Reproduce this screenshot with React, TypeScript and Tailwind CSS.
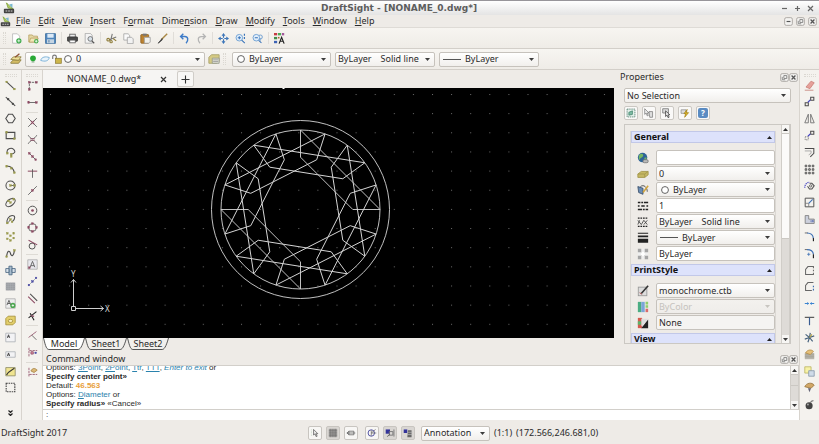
import type { ReactNode } from "react";

const RED = "#8c4a62";
const INK = "#4c4c4c";
const OLIVE = "#9a9a4e";
const BLUE = "#3b6fb5";

function Icon({ children, className = "h-[14px] w-[14px]" }: { children: ReactNode; className?: string }) {
    return (
        <svg viewBox="0 0 14 14" fill="none" strokeWidth="1" className={`shrink-0 ${className}`} aria-hidden="true">
            {children}
        </svg>
    );
}

function Dots({ at, color = OLIVE }: { at: number[][]; color?: string }) {
    return (
        <>
            {at.map(([x, y]) => (
                <rect key={`${x}-${y}`} x={x - 1} y={y - 1} width="2" height="2" fill={color} stroke={color} strokeWidth="0.6" />
            ))}
        </>
    );
}

type Tool = { name: string; art: ReactNode } | null;

const fileTools: Tool[] = [
    {
        name: "New",
        art: (
            <>
                <path d="M2 1h6l3 3v9H2z" fill="#fff" stroke="#b5b5b5" />
                <circle cx="10" cy="10" r="3.300" fill="#36a845" />
                <path d="M10 8v4M8 10h4" stroke="#fff" />
            </>
        ),
    },
    {
        name: "Open",
        art: (
            <>
                <path d="M1 11.500V2.500h4.500l1 1.500h5.500v7.500z" fill="#e6d8a4" stroke="#b6a061" />
                <path d="M1.500 11.500l2-5h9.500l-2 5z" fill="#f2e7b8" stroke="#b6a061" />
                <circle cx="10.500" cy="10.500" r="2.800" fill="#4cae50" />
                <path d="M9 10.500h3M10.500 9v3" stroke="#fff" />
            </>
        ),
    },
    {
        name: "Save",
        art: (
            <>
                <rect x="0.500" y="0.500" width="13" height="13" rx="1" fill="#4f86bd" stroke="#3a6896" />
                <rect x="3" y="1" width="8" height="5" fill="#dbe9f6" />
                <rect x="2.500" y="8" width="9" height="5" fill="#c4d4e2" />
                <path d="M5 9v3" stroke="#3a6896" />
            </>
        ),
    },
    null,
    {
        name: "Print",
        art: (
            <>
                <rect x="3.500" y="1.500" width="7" height="4" fill="#eee" stroke="#555" />
                <rect x="0.500" y="5" width="13" height="5.500" rx="1" fill="#4a4a4a" stroke="#333" />
                <rect x="3.500" y="9" width="7" height="3.500" fill="#fff" stroke="#555" />
            </>
        ),
    },
    {
        name: "Print Preview",
        art: (
            <>
                <path d="M1.500 0.500h6.500l2.500 2.500v10H1.500z" fill="#f4f4f4" stroke="#a5a5a5" />
                <circle cx="8" cy="7.500" r="3" fill="#d7e0e8" stroke="#666" />
                <path d="M10 10l3 3" stroke="#555" strokeWidth="1.500" />
            </>
        ),
    },
    null,
    {
        name: "Cut",
        art: (
            <>
                <path d="M8 1L6 9M13 5L4 8.500" stroke="#777" strokeWidth="1.400" />
                <circle cx="2.800" cy="8.500" r="1.700" stroke="#8f7d3a" strokeWidth="1.400" />
                <circle cx="6.500" cy="11" r="1.500" stroke="#8f7d3a" strokeWidth="1.400" />
                <path d="M9 7l4 3" stroke="#8f7d3a" strokeWidth="1.400" />
            </>
        ),
    },
    {
        name: "Copy",
        art: (
            <>
                <path d="M1 1h5.500l2 2v6H1z" fill="#fafafa" stroke="#a2a2a2" />
                <path d="M5.500 5.500h5.500l2 2v6H5.500z" fill="#f2f2f2" stroke="#a2a2a2" />
            </>
        ),
    },
    {
        name: "Paste",
        art: (
            <>
                <rect x="1" y="2" width="10" height="11" rx="1" fill="#bd832f" stroke="#8c6023" />
                <rect x="3.500" y="0.800" width="5" height="2.600" fill="#777" />
                <path d="M5.500 5.500h7.500v6l-1.500 1.500h-6z" fill="#f2f2ee" stroke="#999" />
            </>
        ),
    },
    {
        name: "Property Painter",
        art: (
            <>
                <path d="M13 1L6 8" stroke="#a98845" strokeWidth="1.800" />
                <path d="M6.500 7L1.500 13l5-4z" fill="#3d3d3d" stroke="#3d3d3d" />
            </>
        ),
    },
    null,
    {
        name: "Undo",
        art: <path d="M5.500 1L2 4.500 5.500 8M2.500 4.500h5c4 0 5 4.500 1.500 8.500" stroke="#3d7bc8" strokeWidth="1.800" />,
    },
    {
        name: "Redo",
        art: <path d="M8.500 1L12 4.500 8.500 8M11.500 4.500h-5C2.500 4.500 1.500 9 5 13" stroke="#b4b4b4" strokeWidth="1.600" />,
    },
    null,
    {
        name: "Pan",
        art: (
            <>
                <path d="M7 3v3M7 8v3M3 7h3M8 7h3" stroke="#3873b8" strokeWidth="1.500" />
                <path d="M7 0l2.500 3.500h-5zM7 14l2.500-3.500h-5zM0 7l3.500-2.500v5zM14 7l-3.500-2.500v5z" fill="#3873b8" />
            </>
        ),
    },
    {
        name: "Zoom In",
        art: (
            <>
                <circle cx="5.500" cy="6" r="4.200" fill="#e2effb" stroke="#5a93cd" />
                <path d="M5.500 4v4M3.500 6h4M8.500 9l4 4" stroke="#3873b8" strokeWidth="1.300" />
                <path d="M12 1v2.500M12 5v2.500" stroke="#3873b8" strokeWidth="1.500" />
            </>
        ),
    },
    {
        name: "Zoom Previous",
        art: (
            <>
                <circle cx="5.500" cy="6" r="4.200" fill="#e2effb" stroke="#5a93cd" />
                <path d="M3.500 6h4M8.500 9.500l3.500 3" stroke="#3873b8" strokeWidth="1.300" />
                <path d="M9 3c3-1 4 0 4 2s-1 3-3 3M11 6.500L9.500 8 11 9.500" stroke="#4d8acb" />
            </>
        ),
    },
    null,
    {
        name: "Properties",
        art: (
            <>
                <path d="M0 0h4v3H0z" fill="#c73b44" />
                <path d="M5 0h4v3H5z" fill="#4bab54" />
                <path d="M10 0h3v3h-3z" fill="#a35a9c" />
                <path d="M0 5h4v3H0z" fill="#3f8d49" />
                <path d="M0 10h4v3H0z" fill="#3c62b4" />
                <path d="M5 5h2v2H5z" fill="#a86432" />
                <path d="M6.500 13.500l3.200-8 3.200 8M7.500 10.500h4.500" stroke="#222" strokeWidth="1.500" />
            </>
        ),
    },
];

const drawTools: Tool[] = [
    { name: "Line", art: <><path d="M2 2.500l10 9" stroke={INK} strokeWidth="1.300" /><Dots at={[[2, 2.5], [12, 11.5]]} /></> },
    { name: "Infinite Line", art: <><path d="M1 1.500l12 11" stroke={INK} strokeWidth="1.300" /><Dots at={[[4, 4], [10, 10]]} color="#444" /></> },
    { name: "Polygon", art: <path d="M4.500 1.500h5L13 7l-3.500 5.500h-5L1 7z" stroke={INK} strokeWidth="1.400" /> },
    { name: "Rectangle", art: <><path d="M1.500 3h11v8h-11z" stroke={INK} strokeWidth="1.400" /><Dots at={[[2, 3], [12, 11]]} /></> },
    { name: "PolyLine", art: <><path d="M3 8C1 2 8 0 11 3s1 6-3 6v3" stroke={INK} strokeWidth="1.300" /><Dots at={[[3, 8], [8, 9], [8, 12]]} /></> },
    { name: "Arc", art: <><path d="M2 2.500c5 0 9 3 10 9" stroke={INK} strokeWidth="1.300" /><Dots at={[[2, 3], [8, 5.5], [12, 11]]} /></> },
    { name: "Circle", art: <><circle cx="7" cy="7" r="5.800" stroke={INK} strokeWidth="1.300" /><path d="M7 7h5" stroke={INK} /><Dots at={[[7, 7], [12, 7]]} /></> },
    { name: "Ellipse", art: <><ellipse cx="7" cy="7" rx="6.800" ry="4" transform="rotate(-38 7 7)" stroke={INK} strokeWidth="1.300" /><Dots at={[[7, 7], [11, 3], [4.5, 5]]} /></> },
    { name: "Ellipse Arc", art: <><path d="M3 12C1 8 5 2 9 2s5 4 0 8" stroke={INK} strokeWidth="1.300" /><path d="M7 7l-3 4" stroke={INK} /><Dots at={[[3, 11.5], [7, 7], [9, 10]]} /></> },
    { name: "Point", art: <Dots at={[[3, 3], [11, 3], [7, 6], [3, 10], [11, 9], [7, 12]]} /> },
    { name: "Spline", art: <><path d="M2 11C3 2 6 3 7 7s4 4 5-4" stroke={INK} strokeWidth="1.400" /><Dots at={[[2, 11], [12, 3]]} /></> },
    { name: "Insert Block", art: <><path d="M5 1.500h4v11H5z" fill="#a9bdce" stroke="#44617d" /><path d="M1 4.500h4v5H1zM9 4.500h4v5H9z" fill="#d8e2ea" stroke="#44617d" /></> },
    { name: "Hatch", art: <><path d="M1 2h12v10H1z" fill="#9c9fa3" /><path d="M1 4.500h12M1 7h12M1 9.500h12M4 2v10M7 2v10M10 2v10" stroke="#b0b3b7" strokeWidth="0.500" /></> },
    { name: "Note", art: <><path d="M1 1h12v12H1z" fill="#eee" stroke="#aaa" /><path d="M2.500 9L5 3l2.500 6M3.500 7h3" stroke="#444" /><circle cx="10" cy="9.500" r="3.300" fill="#4ba64e" /><path d="M8.500 9.500h3M10 8v3" stroke="#fff" /></> },
    { name: "Region", art: <><path d="M1 4.500l3-3h9V9.500l-3 3H1z" fill="#e3cf6b" stroke="#a28b2f" /><ellipse cx="7" cy="7.500" rx="3" ry="2" fill="#f7efc4" stroke="#a28b2f" /></> },
    { name: "Multiline Note", art: <><path d="M1 1.500h12v11H1z" fill="#f3f3f5" stroke="#a9adb3" /><path d="M3 7.500l1.500-4 1.500 4M3.500 6h2" stroke="#333" /></> },
    { name: "Simple Note", art: <><path d="M1 3.500h12v7H1z" fill="#f3f3f5" stroke="#a9adb3" /><path d="M3 9l1.500-4L6 9M3.500 7.500h2" stroke="#333" /></> },
    { name: "Wipeout", art: <><path d="M1 2h12v10.500H1z" fill="#f0e490" stroke="#8a8862" /><path d="M2 11.500C4 7 7 6 12 3" stroke="#333" strokeWidth="1.500" /></> },
    { name: "Boundary", art: <rect x="1.500" y="1.500" width="11" height="11" stroke="#444" strokeWidth="1.400" strokeDasharray="2 1" /> },
];

const snapTools: Tool[] = [
    { name: "Reference Point", art: <><path d="M3 12V3h9" stroke={INK} strokeDasharray="3 1" /><Dots at={[[3, 3], [12, 3], [3, 12]]} color={RED} /></> },
    { name: "End Point", art: <><path d="M2.500 7h9" stroke={INK} /><Dots at={[[2, 7], [12, 7]]} color={RED} /></> },
    null,
    { name: "Intersection", art: <><path d="M1.500 1.500l11 11M12.500 1.500l-11 11" stroke={INK} /><path d="M5 5l4 4M9 5L5 9" stroke={RED} strokeWidth="1.300" /></> },
    { name: "Visual Intersection", art: <><path d="M1.500 1.500c4 6 7 6 11 0M1.500 12.500c4-6 7-6 11 0" stroke={INK} /><path d="M4 6h6M4 8h6" stroke={RED} /></> },
    { name: "MidPoint", art: <><path d="M3 3l8 8" stroke={INK} /><Dots at={[[3, 3], [7, 7], [11, 11]]} color={RED} /></> },
    { name: "Perpendicular", art: <><path d="M1 4h12" stroke={RED} strokeWidth="1.300" /><path d="M7 1.500v11" stroke={INK} /></> },
    { name: "Nearest", art: <><path d="M1.500 12.500l11-11" stroke={INK} /><Dots at={[[7, 7]]} color={RED} /></> },
    null,
    { name: "Center", art: <><circle cx="7" cy="7" r="5.500" stroke={INK} strokeWidth="1.200" /><circle cx="7" cy="7" r="1.700" fill={RED} /></> },
    { name: "Quadrant", art: <><circle cx="7" cy="7" r="5" stroke={INK} /><Dots at={[[7, 2], [12, 7], [7, 12], [2, 7]]} color={RED} /></> },
    { name: "Tangent", art: <><circle cx="6.500" cy="9" r="3.800" stroke={INK} strokeWidth="1.200" /><path d="M2 1.500l11 6" stroke={RED} strokeWidth="1.300" /></> },
    null,
    { name: "Insertion", art: <><path d="M1 1h12v12H1z" fill="#e9e9ee" stroke="#aaa" /><path d="M4 10.500l3-7.500 3 7.500M5 8.500h4" stroke={INK} /><Dots at={[[3, 11]]} color={RED} /></> },
    { name: "Node", art: <><path d="M2 12l10-10" stroke="#9aa" /><Dots at={[[2.5, 11.5], [7, 7], [11.5, 2.5]]} color="#4d4da5" /></> },
    { name: "Parallel", art: <><path d="M1.500 4.500l8.500 8.500" stroke={RED} strokeWidth="1.300" /><path d="M4 1l9 9" stroke={INK} strokeWidth="1.300" /></> },
    { name: "Extension", art: <><path d="M2 10l10-8M9 13L4 4" stroke="#222" strokeWidth="1.400" /><path d="M5 7l4 1" stroke={RED} strokeWidth="1.600" /></> },
    null,
    { name: "Angle", art: <><path d="M12 2L2 9.500" stroke={RED} /><path d="M6 6.500l6 6" stroke={INK} /></> },
    { name: "Tracking", art: <><path d="M2.500 1v12M3 4.500h10" stroke={RED} strokeDasharray="3 1" /><path d="M5 6h3v3H5z" fill="#df91a5" stroke={RED} /><Dots at={[[11, 7.5]]} color="#4d4da5" /></> },
    null,
    { name: "Snap Settings", art: <><path d="M2.500 1v12M3 9.500h10" stroke={RED} strokeDasharray="3 1" /><path d="M5 5c2-4 5-4 8-1L9 7z" fill="#dbb977" stroke="#a37e3f" /></> },
];

const modifyTools: Tool[] = [
    { name: "Delete", art: <><path d="M2.500 9L9 1.500l4 2L7.500 11z" fill="#e6a19a" stroke="#c98078" /><path d="M1 13h11" stroke="#c27b71" /></> },
    { name: "Copy", art: <><path d="M8.500 1.500h4v4h-4zM1.500 8.500h4v4h-4z" stroke={INK} strokeWidth="1.300" /><path d="M5 8l3-3" stroke="#4242c2" strokeWidth="1.500" /></> },
    { name: "Mirror", art: <path d="M5.500 1.500v11H1zM8.500 1.500v11H13z" stroke="#777" strokeWidth="1.200" /> },
    { name: "Move", art: <><path d="M8.500 1.500h4v4h-4z" stroke={INK} strokeWidth="1.300" /><path d="M1.500 8.500h4v4h-4z" stroke={INK} strokeDasharray="1 1" /><path d="M5 8l3-3" stroke="#4242c2" strokeWidth="1.500" /></> },
    { name: "Offset", art: <><path d="M1 2h11.500v6L8 12.500" stroke={INK} strokeWidth="1.300" /><path d="M1 5h8v3L6 10" stroke="#999" /></> },
    { name: "Pattern", art: <path d="M1.500 1.500h2v2h-2zM6 1.500h2v2H6zM10.500 1.500h2v2h-2zM1.500 6h2v2h-2zM6 6h2v2H6zM10.500 6h2v2h-2zM1.500 10.500h2v2h-2zM6 10.500h2v2H6zM10.500 10.500h2v2h-2z" stroke={INK} strokeWidth="1.200" /> },
    { name: "Rotate", art: <><path d="M7 4h3l3 3.500-3 4H7L4.500 8" stroke={INK} strokeWidth="1.300" /><circle cx="8.500" cy="7.500" r="1.500" stroke={INK} /><path d="M1 10c0-5 3-7 6-7" stroke="#4242c2" strokeWidth="1.500" strokeDasharray="1.500 1" /></> },
    { name: "Scale", art: <><path d="M1.500 1.500h11v11h-11z" stroke={INK} strokeWidth="1.200" /><path d="M1.500 8h4.500v4.500" stroke="#777" /><path d="M6 8l5-5" stroke={BLUE} strokeWidth="1.400" /></> },
    { name: "Stretch", art: <><path d="M1.500 2v10h11.500V6.500H6V2z" fill="#ccd0dc" stroke="#777" /><path d="M8 9h4M10.500 7.500L12 9l-1.500 1.500" stroke="#4b5fae" /></> },
    { name: "Fillet", art: <><path d="M1 2.500h4" stroke={INK} /><path d="M4 2.500c5 0 7.500 2 8 7" stroke={BLUE} strokeWidth="1.500" /><path d="M12 9v4" stroke="#222" strokeWidth="1.500" /></> },
    { name: "Chamfer", art: <><path d="M1 2h4" stroke={INK} /><path d="M4 2c5 0 7.500 2 8 6" stroke={BLUE} strokeWidth="1.500" /><path d="M12 8v5" stroke="#222" strokeWidth="1.500" /><path d="M6 6v4M4 8h4" stroke={BLUE} /></> },
    { name: "Split", art: <path d="M12 4V2H5L2 5.500V12h10v-2M12 6v2" stroke="#666" strokeWidth="1.300" /> },
    { name: "Split at Point", art: <><path d="M12 2H5L2 5.500V12h8" stroke="#666" strokeWidth="1.300" /><path d="M12 6v2M12 10v2" stroke={BLUE} strokeWidth="1.500" /></> },
    { name: "Trim", art: <><path d="M1 7h5M8 7h5" stroke="#3b84d0" strokeWidth="1.400" /><path d="M6.500 7L4 5v4zM7.500 7L10 5v4z" fill="#3b84d0" /></> },
    { name: "Extend", art: <><path d="M1 3h12" stroke="#555" strokeWidth="1.500" /><path d="M7 3v10" stroke="#3a5d92" strokeWidth="1.500" /></> },
    { name: "Explode", art: <><path d="M7 7L2 3M7 7l1-6M7 7l6-2M7 7l4 5M7 7l-2 6M7 7L1 9" stroke="#47627d" strokeWidth="1.500" /><path d="M7 7l3-4" stroke="#b5a33e" strokeWidth="1.500" /></> },
    { name: "Edit Hatch", art: <><path d="M1 5h12v8H1z" fill="#b8b5ac" /><path d="M1 7.500h12M1 10h12" stroke="#8d897f" strokeWidth="0.600" /><path d="M2 5c2-4 7-5 10-2l-4 4z" fill="#e6c079" stroke="#b18a43" /></> },
    { name: "Draw Order", art: <><path d="M1 1h8v8H1z" fill="#f7f2a6" stroke="#b7b25f" /><path d="M6 6h7v7H6z" fill="#cfdbe8" stroke="#8294a8" /></> },
    { name: "Weld", art: <><path d="M1 6c2-5 9-6 12-2L9 8z" fill="#d1a767" stroke="#92703a" /><path d="M5 8l2 5 2-5z" fill="#667" /></> },
    { name: "Clean", art: <><circle cx="6.500" cy="8.500" r="4.500" fill="#444" /><path d="M8 5c1-3 2-3 4-3" stroke="#777" strokeWidth="1.500" /><circle cx="5" cy="7" r="1.200" fill="#aaa" /></> },
];

function Grip({ vertical = false }: { vertical?: boolean }) {
    return (
        <div
            className={
                vertical
                    ? "h-3 w-[3px] shrink-0 border-x border-dotted border-[#dbd8d2]"
                    : "h-[3px] w-3 shrink-0 border-y border-dotted border-[#dbd8d2]"
            }
        />
    );
}

function ToolButton({ tool, className }: { tool: Tool; className: string }) {
    return (
        <button type="button" aria-label={tool?.name} className={`flex shrink-0 items-center justify-center ${className}`}>
            <Icon className="h-[11px] w-[11px]">{tool?.art}</Icon>
        </button>
    );
}

function Caret({ muted = false }: { muted?: boolean }) {
    return (
        <svg viewBox="0 0 5 3" className="h-[3px] w-[5px] shrink-0" aria-hidden="true">
            <path d="M0 0h5L2.500 3z" fill={muted ? "#c8c5c0" : "#3c3c3c"} />
        </svg>
    );
}

function Combo({ label, value, lead, disabled = false, className = "" }: { label: string; value: string; lead?: ReactNode; disabled?: boolean; className?: string }) {
    return (
        <div
            className={`flex h-[15px] items-center gap-1 rounded-xs border border-[#c6c2bc] bg-gradient-to-b pr-1 pl-[2px] ${disabled ? "from-[#f3f1ee] to-[#efedea] text-[#c5c2bd]" : "from-white to-[#f1efec]"} ${className}`}
        >
            {lead}
            <select aria-label={label} disabled={disabled} className="min-w-0 flex-1 appearance-none bg-transparent outline-none">
                <option>{value}</option>
            </select>
            <Caret muted={disabled} />
        </div>
    );
}

const ring = (
    <Icon className="ml-[2px] h-2 w-2">
        <circle cx="7" cy="7" r="6" fill="#fff" stroke="#555" strokeWidth="1.600" />
    </Icon>
);

const rule = <span className="ml-px h-px w-[18px] shrink-0 bg-[#555]" />;

const appMark = (
    <>
        <path d="M4 1l5 5 3 2-6-1z" fill="#b4cf68" stroke="#80a23a" />
        <path d="M7 3l4-1v5" fill="#79b8cf" />
        <rect x="1" y="8" width="12" height="5" rx="1" fill="#434343" />
        <path d="M3 10.500h2M6 10.500h2M9 10.500h2" stroke="#eee" />
    </>
);

const layerMark = (
    <>
        <path d="M1 11l3-3h9l-3 4H1z" fill="#d4bd66" stroke="#8c7d3f" />
        <path d="M1 7.500l3-3h9l-3 4z" fill="#efe09a" stroke="#8c7d3f" />
        <path d="M6 5l5-4" stroke="#8d5230" strokeWidth="1.500" />
    </>
);

function WindowButton({ kind, label }: { kind: "min" | "restore" | "close"; label: string }) {
    return (
        <button type="button" aria-label={label} className="flex h-[9px] w-[9px] items-center justify-center">
            <Icon className="h-[9px] w-[9px]">
                <rect x="1" y="1" width="12" height="12" rx="2.500" fill="#f4f3f1" stroke="#a29f9a" strokeWidth="1.300" />
                {kind === "min" && <path d="M4 7h6" stroke="#555" strokeWidth="1.800" />}
                {kind === "restore" && <path d="M6 4h4.500v4.500H6zM3.500 6v4.500H8" stroke="#777" strokeWidth="1.300" />}
                {kind === "close" && <path d="M4 4l6 6M10 4l-6 6" stroke="#555" strokeWidth="2" />}
            </Icon>
        </button>
    );
}

// [text before the accelerator, accelerator, rest]
const menus = [
    ["", "F", "ile"],
    ["", "E", "dit"],
    ["", "V", "iew"],
    ["", "I", "nsert"],
    ["F", "o", "rmat"],
    ["Dime", "n", "sion"],
    ["", "D", "raw"],
    ["", "M", "odify"],
    ["", "T", "ools"],
    ["", "W", "indow"],
    ["", "H", "elp"],
];

function Header() {
    return (
        <header>
            <div className="flex h-[15px] items-center border-t border-[#97959a] bg-gradient-to-b from-white to-[#e4e4e4] px-[3px]">
                <Icon className="h-3 w-3">{appMark}</Icon>
                <h1 className="flex-1 pl-[2px] text-center font-['DejaVu_Sans'] text-[9px] font-bold text-[#5d5d5d]">
                    DraftSight - [NONAME_0.dwg*]
                </h1>
                <div className="flex gap-[6px] pr-[2px]">
                    {[["Minimize", "M1 3.5h5"], ["Maximize", "M3.500 1v5M1 3.500h5"], ["Close", "M1 1l5 5M6 1l-5 5"]].map(([name, d]) => (
                        <button key={name} type="button" aria-label={name}>
                            <svg viewBox="0 0 7 7" className="h-[7px] w-[7px]">
                                <path d={d} stroke="#666" strokeWidth="1.200" fill="none" />
                            </svg>
                        </button>
                    ))}
                </div>
            </div>
            <nav className="flex h-[13px] items-center border-b border-[#dedbd6]">
                <Icon className="mr-[5px] h-[11px] w-[11px]">{appMark}</Icon>
                <div className="flex flex-1 gap-2">
                    {menus.map(([before, key, after]) => (
                        <button key={before + key + after} type="button">
                            {before}
                            <span className="underline underline-offset-1">{key}</span>
                            {after}
                        </button>
                    ))}
                </div>
                <div className="flex gap-[3px] pr-[2px]">
                    <WindowButton kind="min" label="Minimize document" />
                    <WindowButton kind="restore" label="Restore document" />
                    <WindowButton kind="close" label="Close document" />
                </div>
            </nav>
            <div className="flex h-[21px] items-center border-b border-[#d3cfc9] bg-gradient-to-b from-[#f7f5f1] to-[#efece7] pl-[3px]">
                <Grip vertical />
                <div className="flex items-center pl-[2px]">
                    {fileTools.map((tool, i) =>
                        tool ? (
                            <ToolButton key={tool.name} tool={tool} className="h-[17px] w-[17px]" />
                        ) : (
                            <span key={i} className="mx-[2px] h-3 w-px bg-[#e0ddd8]" />
                        )
                    )}
                </div>
            </div>
            <div className="flex h-[21px] items-center border-b border-[#d3cfc9] bg-gradient-to-b from-[#f7f5f1] to-[#efece7] pl-[3px]">
                <Grip vertical />
                <button type="button" aria-label="Layers Manager" className="mr-[3px] ml-1">
                    <Icon className="h-3 w-3">{layerMark}</Icon>
                </button>
                <Combo
                    label="Active layer"
                    value="0"
                    className="w-[180px]"
                    lead={
                        <span className="flex items-center gap-[2px]">
                            <Icon className="h-[10px] w-[10px]">
                                <circle cx="7" cy="6" r="4" fill="#29a936" />
                                <path d="M5 11h4" stroke="#8fb58f" strokeWidth="2" />
                            </Icon>
                            <Icon className="h-[10px] w-[10px]">
                                <path d="M1 9c1-5 7-6 12-4-1 5-6 6-12 4z" fill="#eaf4fb" stroke="#7fb4d9" strokeWidth="1.400" />
                            </Icon>
                            <Icon className="h-[10px] w-[10px]">
                                <path d="M1 7V3.500C1 1 6 1 6 3.500V7" stroke="#777" strokeWidth="1.600" />
                                <rect x="5" y="6" width="8" height="7" fill="#cdb64b" stroke="#8a762b" />
                            </Icon>
                            <Icon className="h-2 w-2">
                                <circle cx="7" cy="7" r="6" fill="#fff" stroke="#555" strokeWidth="1.600" />
                            </Icon>
                        </span>
                    }
                />
                <button type="button" aria-label="Layer States" className="mx-[3px]">
                    <Icon className="h-3 w-3">
                        <path d="M1 5l3-3h9v8l-3 2H1z" fill="#d5ca83" stroke="#a9a16a" />
                        <path d="M5 6h8v6H5z" fill="#e3e5da" stroke="#95988a" />
                        <path d="M6 8h6M6 10h6" stroke="#999" />
                    </Icon>
                </button>
                <Grip vertical />
                <div className="flex gap-1 pl-[6px]">
                    <Combo label="Line color" value="ByLayer" lead={ring} className="w-[99px]" />
                    <Combo label="Line style" value={"ByLayer\u2003Solid line"} className="w-[100px]" />
                    <Combo label="Line weight" value="ByLayer" lead={rule} className="w-[100px]" />
                </div>
            </div>
        </header>
    );
}

function Toolbar({ tools, spread = false, more = false, className }: { tools: Tool[]; spread?: boolean; more?: boolean; className: string }) {
    return (
        <aside className={`flex shrink-0 flex-col items-center border-r border-[#d8d4ce] bg-[#f4f2ee] pt-1 ${className}`}>
            <Grip />
            <div className={`flex flex-col items-center ${spread ? "flex-1 justify-between" : ""}`}>
                {tools.map((tool, i) =>
                    tool ? (
                        <ToolButton key={tool.name} tool={tool} className={spread ? "h-4 w-[17px]" : "h-[17px] w-[17px]"} />
                    ) : (
                        <span key={i} className="my-px h-px w-3 bg-[#dedbd5]" />
                    )
                )}
            </div>
            {more && (
                <button type="button" aria-label="More tools" className="flex h-6 items-end pb-1">
                    <svg viewBox="0 0 5 6" className="h-[6px] w-[5px]">
                        <path d="M0.500 0.500l2 2 2-2M0.500 3.500l2 2 2-2" fill="none" stroke="#222" strokeWidth="1.200" />
                    </svg>
                </button>
            )}
        </aside>
    );
}

const CX = 257.5;
const CY = 121.5;
const R_OUTER = 89;
const R_RING = 79.5;
const R_FACET = 52.3;

function Drawing() {
    const facets = Array.from({ length: 10 }, (_, i) => i * 36);
    return (
        <svg className="min-h-0 w-full flex-1 bg-black" role="img" aria-label="Model space">
            <defs>
                <pattern id="grid" x="7" y="6" width="19.100" height="19.150" patternUnits="userSpaceOnUse">
                    <rect width="1" height="1" fill="#6f6f6f" />
                </pattern>
            </defs>
            <rect width="100%" height="100%" fill="url(#grid)" />
            <path d="M239.500 0h2" stroke="#fff" strokeWidth="2" />
            <g fill="none" stroke="#d6d6d6" strokeWidth="0.900" transform={`translate(${CX} ${CY})`}>
                <circle r={R_OUTER} />
                <circle r={R_RING} />
                {facets.map((angle) => (
                    <path
                        key={angle}
                        transform={`rotate(${angle})`}
                        d={`M0 ${-R_RING}L${R_RING} 0H${R_FACET}L0 ${-R_FACET}Z`}
                    />
                ))}
            </g>
            <g fill="none" stroke="#cfcfcf">
                <path d="M28.500 218.500h4v4h-4zM32.500 220.500h28M57.500 218l3 2.500-3 2.500M30.500 218.500v-27M28 194.500l2.500-3 2.500 3" />
            </g>
            <g fill="#d8d8d8" className="text-[8px]">
                <text x="62" y="224">X</text>
                <text x="28" y="189">Y</text>
            </g>
        </svg>
    );
}

function SheetTab({ name, active = false }: { name: string; active?: boolean }) {
    return (
        <button type="button" className="relative isolate h-3 w-[42px] leading-3">
            <svg viewBox="0 0 43 12" preserveAspectRatio="none" className="absolute inset-0 -z-10 h-full w-full" aria-hidden="true">
                <path d="M0.500 0C2 5 3 11.500 6 11.500H36C39 11.500 41 5 42.500 0" fill={active ? "#fff" : "#f1efec"} stroke="#555" />
            </svg>
            {name}
        </button>
    );
}

function Workspace() {
    return (
        <section className="flex min-w-0 flex-1 flex-col">
            <div className="flex h-[18px] items-center">
                <div className="flex h-full w-[134px] items-center bg-[#f6f5f3] pl-6">
                    <span className="flex-1">NONAME_0.dwg*</span>
                    <button type="button" aria-label="Close tab" className="mr-[10px]">
                        <svg viewBox="0 0 7 7" className="h-[7px] w-[7px]">
                            <path d="M1 1l5 5M6 1l-5 5" stroke="#333" strokeWidth="1.200" />
                        </svg>
                    </button>
                </div>
                <button type="button" aria-label="New tab" className="flex h-4 w-[17px] items-center justify-center rounded-xs border border-[#d0cdc8] bg-[#f8f7f5]">
                    <svg viewBox="0 0 9 9" className="h-[9px] w-[9px]">
                        <path d="M4.500 0.500v8M0.500 4.500h8" stroke="#333" strokeWidth="1.100" />
                    </svg>
                </button>
            </div>
            <Drawing />
            <div className="flex h-[13px]">
                <SheetTab name="Model" active />
                <SheetTab name="Sheet1" />
                <SheetTab name="Sheet2" />
            </div>
        </section>
    );
}

const selectionTools: { name: string; art: ReactNode }[] = [
    { name: "Select All", art: <><rect x="1.500" y="1.500" width="11" height="11" fill="#e3f0ea" stroke="#3d6b5b" strokeDasharray="2 1" /><path d="M4 10V6l5-2v5z" fill="#7dbba4" stroke="#428169" /></> },
    { name: "Select Matching", art: <><path d="M1 1v8l2-2 1.500 4 1.500-.5L4.500 7H7z" fill="#eee" stroke="#777" /><path d="M7 5h5v8H8z" fill="#ddd" stroke="#777" /></> },
    { name: "Select Elements", art: <><path d="M1 1h8v6H1z" fill="#ddd" stroke="#666" /><path d="M5 4v8l2-2 1.500 3.500 1.500-.7L8.500 9.500H11z" fill="#eee" stroke="#333" /></> },
    { name: "Smart Select", art: <><path d="M1.500 2.500h7v5h-7z" fill="#ddd" stroke="#888" /><path d="M10 2L5.500 8H8l-1.500 5L12 6.500H9z" fill="#e6bb22" stroke="#9c7d18" /></> },
];

type Field = { label: string; value: string; kind: "text" | "combo"; lead?: ReactNode; disabled?: boolean; flat?: boolean; art: ReactNode };

const generalFields: Field[] = [
    { label: "Hyperlink", value: "", kind: "text", art: <><circle cx="6.500" cy="6.500" r="5.500" fill="#2d6498" /><path d="M3 3c3-2 5 0 4 2S3 7 3 9 1 6 3 3zM8 7l3-1v4z" fill="#74b661" /><rect x="7" y="9" width="6" height="3.500" rx="1.500" fill="#bbb" stroke="#777" /></> },
    { label: "Layer", value: "0", kind: "combo", art: <><path d="M1 7l4-3h8v4l-4 3H1z" fill="#c6b863" stroke="#a3964b" /><path d="M1 7h8l4-3M9 7v4" stroke="#a3964b" /></> },
    { label: "Line color", value: "ByLayer", kind: "combo", lead: ring, art: <><path d="M1 3l6 2v7l-5-2z" fill="#6b8db5" stroke="#3b506b" /><path d="M4 3c4-3 8 1 8 6" stroke="#444" /><path d="M13 2l-6 8" stroke="#d0a33c" strokeWidth="1.800" /></> },
    { label: "Line scale", value: "1", kind: "text", art: <path d="M1 3h3M5 3h2M8 3h5M1 7h2M5 7h4M11 7h2M1 11h5M7 11h2M10 11h3" stroke="#222" strokeWidth="1.800" /> },
    { label: "Line style", value: "ByLayer\u2003Solid line", kind: "combo", art: <><path d="M1 2.500h12M1 12h12" stroke="#222" strokeWidth="1.500" strokeDasharray="2 1" /><path d="M1 5l4 5 3-5 4 5M3 5l-2 5M8 10l4-5" stroke="#444" /></> },
    { label: "Line weight", value: "ByLayer", kind: "combo", lead: rule, art: <path d="M1 1h12v1H1zM1 4h12v2H1zM1 8h12v4.500H1z" fill="#222" /> },
    { label: "Transparency", value: "ByLayer", kind: "text", art: <><rect x="1" y="1" width="12" height="12" fill="#eee" /><path d="M1 1h4v4H1zM9 1h4v4H9zM5 5h4v4H5zM1 9h4v4H1zM9 9h4v4H9z" fill="#a5a5a5" /><circle cx="7" cy="7" r="2.500" fill="#fff" /></> },
];

const printFields: Field[] = [
    { label: "Print style table", value: "monochrome.ctb", kind: "combo", art: <><rect x="1.500" y="2.500" width="10" height="10" fill="#ddd" stroke="#999" /><path d="M13 1l-8 9" stroke="#333" strokeWidth="1.800" /><path d="M3 9l3 2" stroke="#a44" /></> },
    { label: "Print style", value: "ByColor", kind: "combo", disabled: true, art: <><path d="M1 1h4v12H1z" fill="#4bad83" /><path d="M5 1h4v12H5z" fill="#7aa5d8" /><path d="M10 1h3v3h-3zM10 5h3v3h-3z" fill="#8fd06b" /><path d="M10 9h3v4h-3z" fill="#d96b6b" /></> },
    { label: "Print table type", value: "None", kind: "text", flat: true, art: <><path d="M1 1h5v12H1z" fill="#d55a4e" /><path d="M1 5h4v4H1z" fill="#5bb36a" /><path d="M5 13l8-10v10z" fill="#222" /><path d="M5 2h8L5 11z" fill="#ddd" /></> },
];

function Group({ title, fields }: { title: string; fields: Field[] }) {
    return (
        <section className="border-x border-[#dbd8d3]">
            <button type="button" className="flex h-3 w-full items-center justify-between border border-[#c2c8e8] bg-[#dde2fb] px-[2px] font-bold text-[#111]">
                {title}
                <svg viewBox="0 0 5 3" className="h-[3px] w-[5px]" aria-hidden="true">
                    <path d="M0 3h5L2.500 0z" fill="#222" />
                </svg>
            </button>
            {fields.length > 0 && (
                <div className="flex flex-col gap-px pt-[7px] pb-[3px]">
                    {fields.map((field) => (
                        <div key={field.label} className="flex items-center pl-[6px]">
                            <Icon className="mr-[7px] h-3 w-3">{field.art}</Icon>
                            {field.kind === "combo" ? (
                                <Combo label={field.label} value={field.value} lead={field.lead} disabled={field.disabled} className="min-w-0 flex-1" />
                            ) : (
                                <input
                                    aria-label={field.label}
                                    defaultValue={field.value}
                                    className={`h-[15px] min-w-0 flex-1 rounded-xs border border-[#c6c2bc] px-[2px] outline-none ${field.flat ? "bg-[#f5f4f2]" : "bg-white"}`}
                                />
                            )}
                        </div>
                    ))}
                </div>
            )}
        </section>
    );
}

function Scrollbar({ thumb }: { thumb: string }) {
    return (
        <div className="flex w-[9px] shrink-0 flex-col border-x border-[#d0cdc8] bg-[#dedbd7]" aria-hidden="true">
            <div className="flex h-2 items-center justify-center bg-[#f7f6f4]">
                <svg viewBox="0 0 5 3" className="h-[3px] w-[5px]">
                    <path d="M0 3h5L2.500 0z" fill="#333" />
                </svg>
            </div>
            <div className={`border-y border-[#cbc8c3] ${thumb}`} />
            <div className="flex-1" />
            <div className="flex h-2 items-center justify-center bg-[#f7f6f4]">
                <Caret />
            </div>
        </div>
    );
}

function Properties() {
    return (
        <section className="flex w-[185px] shrink-0 flex-col pr-2 pb-[7px] pl-[10px]">
            <div className="-mr-[7px] -ml-1 flex h-[14px] items-center">
                <h2 className="flex-1">Properties</h2>
                <WindowButton kind="restore" label="Float properties" />
                <WindowButton kind="close" label="Close properties" />
            </div>
            <Combo label="Selection" value="No Selection" className="mt-1" />
            <div className="mt-[3px] flex gap-1">
                {selectionTools.map(({ name, art }) => (
                    <button key={name} type="button" aria-label={name} className="flex h-[14px] w-[14px] items-center justify-center rounded-xs border border-[#cbc8c3] bg-[#faf9f8]">
                        <Icon className="h-[10px] w-[10px]">{art}</Icon>
                    </button>
                ))}
                <button type="button" aria-label="Help" className="flex h-[14px] w-[14px] items-center justify-center rounded-xs border border-[#cbc8c3] bg-[#faf9f8]">
                    <span className="h-[10px] w-[10px] rounded-xs bg-[#5a8bc2] text-[8px] leading-[10px] font-bold text-white">?</span>
                </button>
            </div>
            <div className="mt-1 flex min-h-0 flex-1 border border-[#cbc8c3]">
                <div className="h-full min-h-0 flex-1 overflow-hidden px-[5px] pt-[6px]">
                    <Group title="General" fields={generalFields} />
                    <Group title="PrintStyle" fields={printFields} />
                    <Group title="View" fields={[]} />
                </div>
                <Scrollbar thumb="h-[106px] bg-[#fbfaf9]" />
            </div>
        </section>
    );
}

function Key({ first, rest }: { first: string; rest: string }) {
    return (
        <a href="#command" className="text-[#2a82ad]">
            <span className="underline">{first}</span>
            {rest}
        </a>
    );
}

function CommandWindow() {
    return (
        <section className="shrink-0">
            <div className="mt-[2px] flex h-3 items-center pr-px pl-[3px]">
                <h2 className="flex-1">Command window</h2>
                <WindowButton kind="restore" label="Float command window" />
                <WindowButton kind="close" label="Close command window" />
            </div>
            <div className="flex h-[45px] border-y border-[#d2cfca] bg-white font-['Liberation_Sans'] text-[8px] leading-[9px]">
                <div className="flex flex-1 flex-col justify-end overflow-hidden pb-px pl-[3px]">
                    <p>
                        Options: <Key first="3P" rest="oint" />, <Key first="2P" rest="oint" />, <Key first="T" rest="tr" />, <Key first="TTT" rest="" />,{" "}
                        <i className="text-[#2a82ad]">Enter to exit</i> or
                    </p>
                    <p className="font-bold">Specify center point»</p>
                    <p>
                        Default: <b className="text-[#e8a03c]">46.563</b>
                    </p>
                    <p>
                        Options: <Key first="D" rest="iameter" /> or
                    </p>
                    <p>
                        <b>Specify radius»</b> «Cancel»
                    </p>
                </div>
                <Scrollbar thumb="h-3 bg-[#dedbd7]" />
            </div>
            <label className="flex h-[10px] items-center bg-white pl-[3px] font-['Liberation_Sans'] text-[8px] leading-[10px]">
                :
                <input id="command" aria-label="Command" className="min-w-0 flex-1 bg-transparent outline-none" />
            </label>
        </section>
    );
}

const toggles: { name: string; on: boolean; gap?: boolean; art: ReactNode }[] = [
    { name: "Snap", on: false, art: <><path d="M5 2v8l2-2 1.500 4 1.500-.5L8.500 8H11z" fill="#eee" stroke="#555" /><path d="M2 2v10" stroke="#b3cbb3" strokeDasharray="1 1" /></> },
    { name: "Grid", on: true, art: <path d="M3 1v12M5.700 1v12M8.400 1v12M11 1v12M1 3h12M1 5.700h12M1 8.400h12M1 11h12" stroke="#555" /> },
    { name: "Ortho", on: false, art: <path d="M4 4.500h7v5H4zM1 7h12M4 4.500L1.500 7 4 9.500" stroke="#555" /> },
    { name: "Polar", on: false, gap: true, art: <><circle cx="6" cy="7" r="4.500" stroke="#5555a5" strokeWidth="1.400" /><path d="M6 3v8M6 7l6-5M6 7h7" stroke="#666" /></> },
    { name: "ESnap", on: true, art: <><path d="M1 2h6v6H1z" fill="#33339a" /><path d="M6 5h5v5H6zM12.500 2v10" stroke="#777" strokeWidth="1.300" /><path d="M3 12l4-3" stroke="#444" /></> },
    { name: "ETrack", on: true, art: <><path d="M1 2h5v5H1z" fill="#33339a" /><path d="M7 3h5v10H6z" fill="#666" /><path d="M6 6h7M6 9h7" stroke="#bbb" /></> },
];

function StatusBar() {
    return (
        <footer className="flex h-6 shrink-0 items-center pt-[2px]">
            <span className="w-[308px] shrink-0 pl-px">DraftSight 2017</span>
            <div className="flex gap-1">
                {toggles.map(({ name, on, gap, art }) => (
                    <button
                        key={name}
                        type="button"
                        aria-label={name}
                        aria-pressed={on}
                        className={`flex h-[14px] w-[14px] items-center justify-center rounded-xs border border-[#c8c5c0] ${on ? "bg-[#d9d6d2]" : "bg-[#f8f7f5]"} ${gap ? "ml-[3px]" : ""}`}
                    >
                        <Icon className="h-[10px] w-[10px]">{art}</Icon>
                    </button>
                ))}
            </div>
            <Combo label="Annotation scale" value="Annotation" className="mr-1 ml-[6px] w-[69px]" />
            <span className="mr-1">(1:1)</span>
            <span>(172.566,246.681,0)</span>
        </footer>
    );
}

export default function App() {
    return (
        <div className="flex h-screen min-h-96 flex-col bg-[#eeebe7] font-['Noto_Sans',sans-serif] text-[9px] leading-3 text-[#2a2a2a]">
            <Header />
            <main className="flex min-h-0 flex-1">
                <Toolbar tools={drawTools} spread more className="w-[22px]" />
                <Toolbar tools={snapTools} className="w-[21px]" />
                <div className="flex min-w-0 flex-1 flex-col">
                    <div className="flex min-h-0 flex-1">
                        <Workspace />
                        <Properties />
                    </div>
                    <CommandWindow />
                </div>
                <aside className="flex w-5 shrink-0 flex-col items-center border-l border-[#d8d4ce] bg-[#f4f2ee] pt-1 pb-[7px]">
                    <Grip />
                    <div className="flex flex-1 flex-col items-center justify-between">
                        {modifyTools.map((tool) => (
                            <ToolButton key={tool?.name} tool={tool} className="h-4 w-4" />
                        ))}
                    </div>
                </aside>
            </main>
            <StatusBar />
        </div>
    );
}
